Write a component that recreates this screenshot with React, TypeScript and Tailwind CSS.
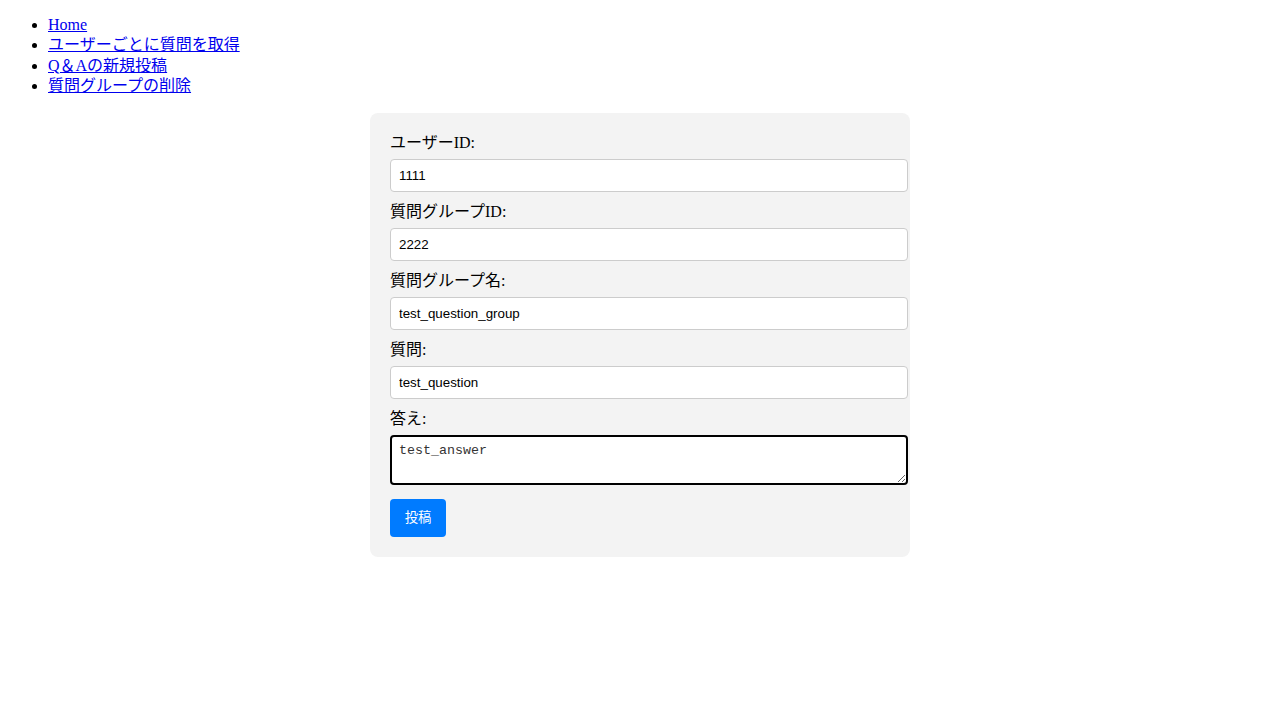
import React from "react";

const serif = { fontFamily: '"Liberation Serif", "Noto Sans CJK JP", serif' };

export default function App() {
  const links = ["Home", "ユーザーごとに質問を取得", "Q＆Aの新規投稿", "質問グループの削除"];
  const fields = [
    { label: "ユーザーID:", value: "1111" },
    { label: "質問グループID:", value: "2222" },
    { label: "質問グループ名:", value: "test_question_group" },
    { label: "質問:", value: "test_question" },
  ];
  return (
    <div className="bg-white min-h-[720px] text-black text-[16px]" style={serif}>
      <ul className="list-disc pl-12 mt-[15px] mb-[17px] leading-[20.3px]">
        {links.map((l) => (
          <li key={l}>
            <a href="#" className="text-[#0000ee] underline">
              {l}
            </a>
          </li>
        ))}
      </ul>
      <div className="mx-auto w-[540px] bg-[#f3f3f3] rounded-lg p-5">
        {fields.map((f) => (
          <div key={f.label}>
            <label className="block leading-[19px] mb-[7px]">{f.label}</label>
            <input
              readOnly
              value={f.value}
              className="block w-[518px] h-[33px] px-2 border border-[#cccccc] rounded bg-white text-[13.333px] mb-[10px] outline-none"
              style={{ fontFamily: '"Liberation Sans", Arial, sans-serif' }}
            />
          </div>
        ))}
        <label className="block leading-[19px] mb-[7px]">答え:</label>
        <textarea
          readOnly
          value="test_answer"
          className="block w-[518px] h-[50px] px-[7px] py-[6px] border-2 border-black rounded bg-white text-[13.333px] leading-[15px] text-[#333] resize-y outline-none mb-[14px]"
          style={{ fontFamily: '"Liberation Mono", "Courier New", monospace' }}
        />
        <button
          className="block h-[38px] w-[56px] bg-[#007bff] text-white rounded text-[13.333px]"
          style={{ fontFamily: '"Liberation Sans", "Noto Sans CJK JP", sans-serif' }}
        >
          投稿
        </button>
      </div>
    </div>
  );
}
